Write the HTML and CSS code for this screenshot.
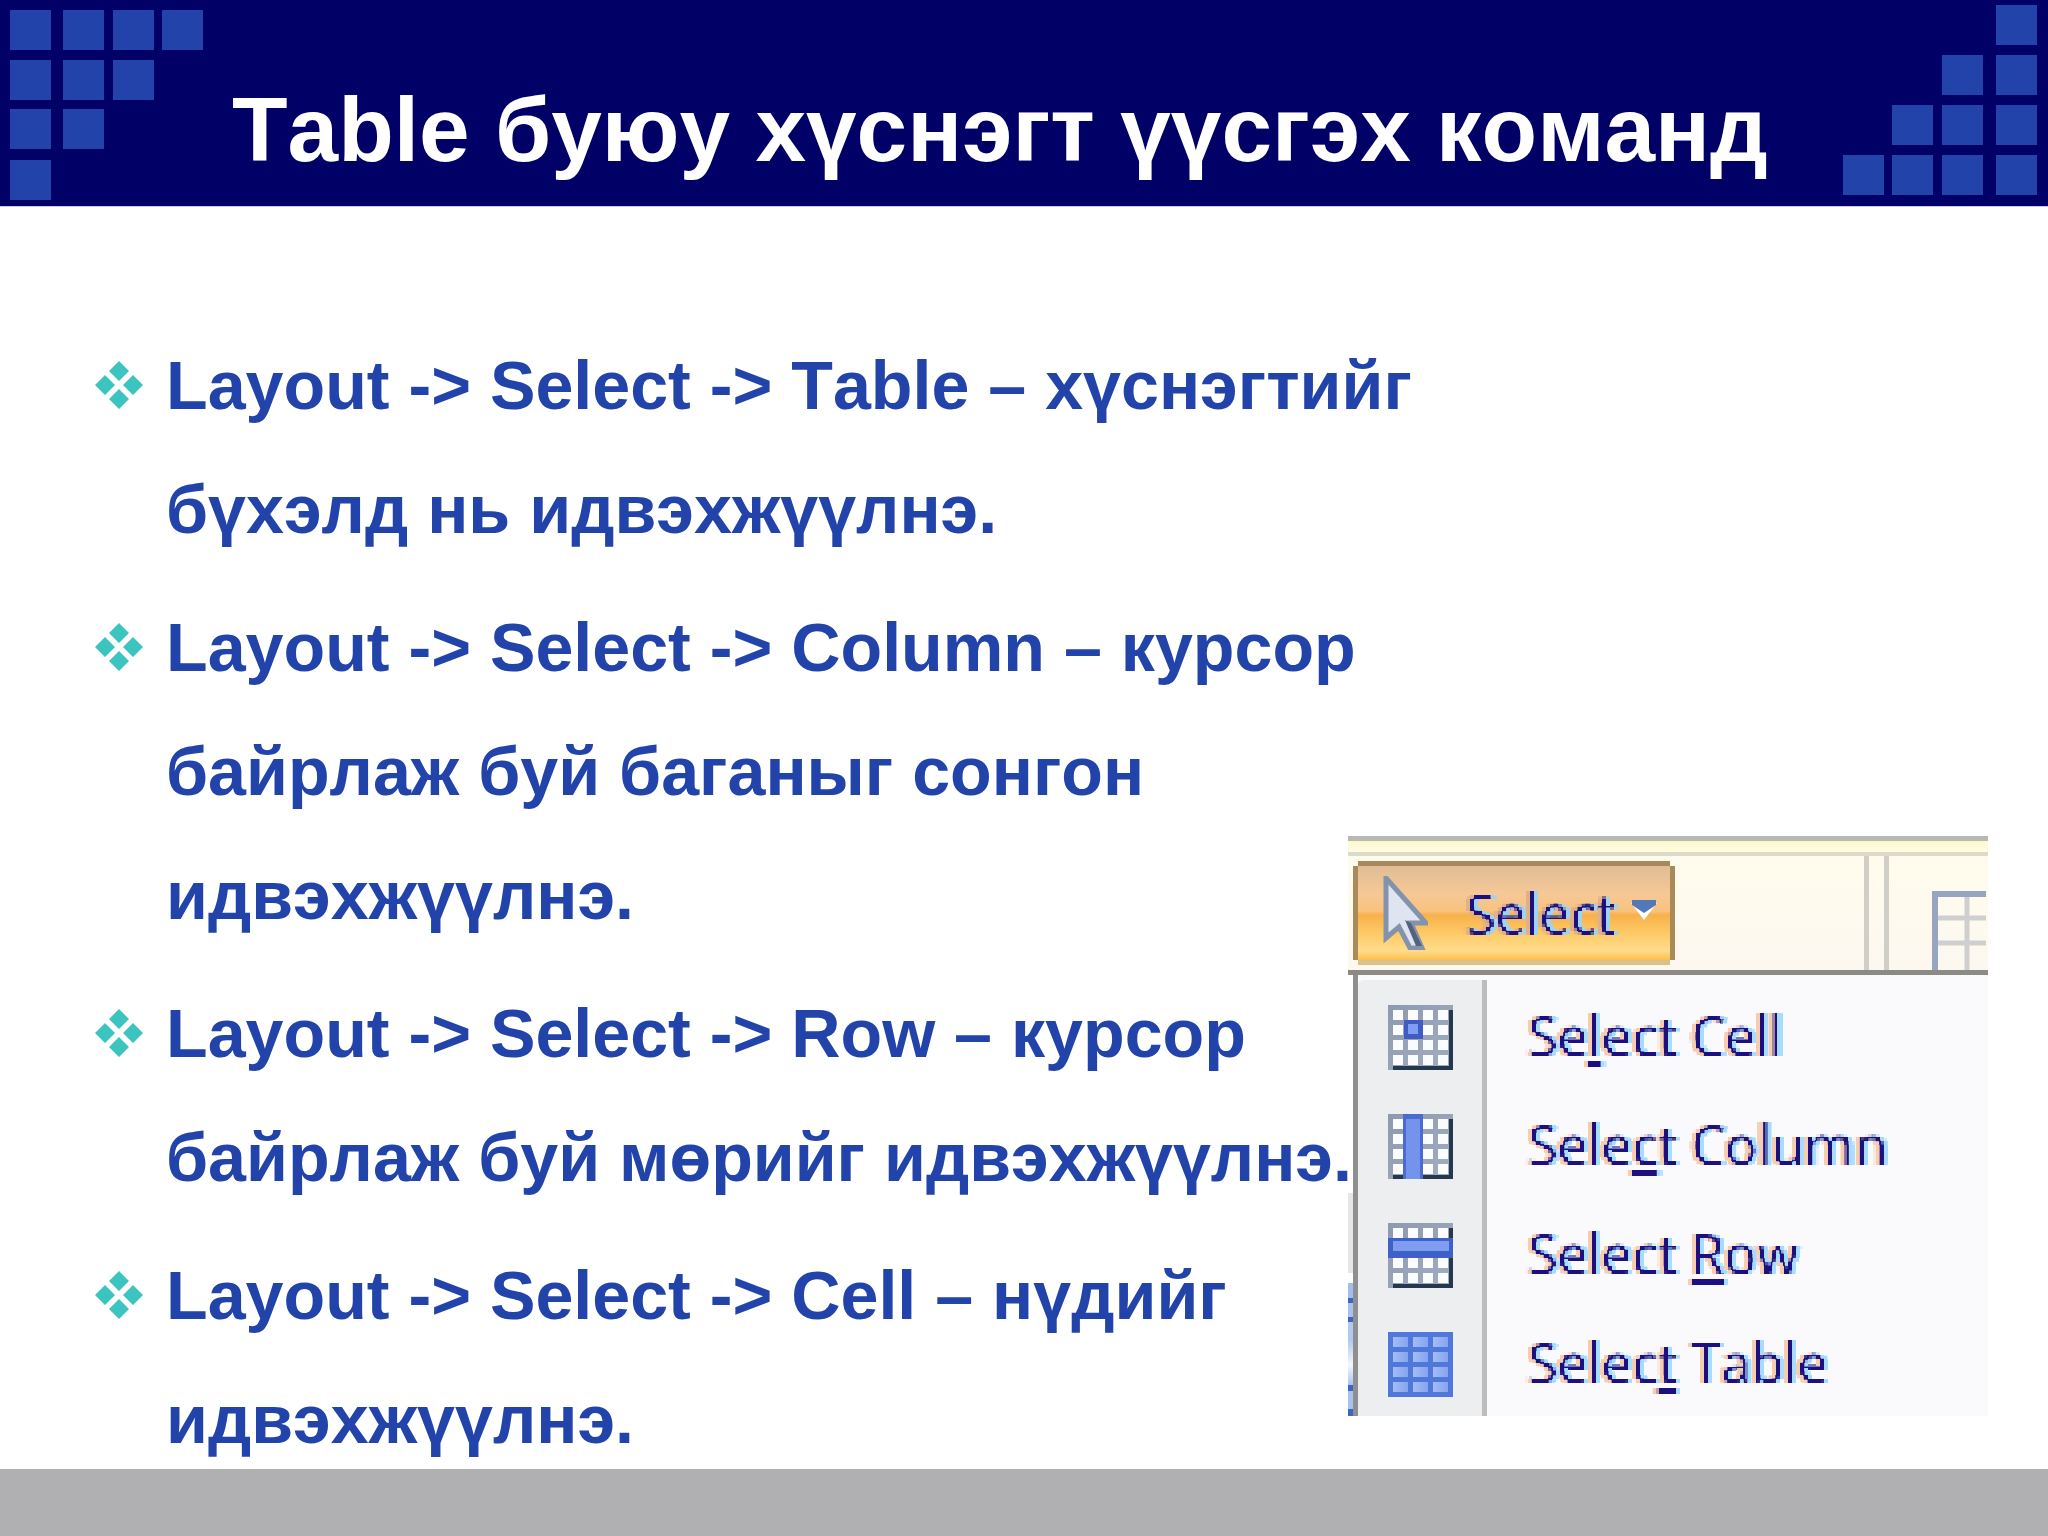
FILE: index.html
```html
<!DOCTYPE html>
<html lang="mn">
<head>
<meta charset="utf-8">
<title>Table</title>
<link rel="stylesheet" href="styles.css">
</head>
<body>
<svg class="defs" width="0" height="0" aria-hidden="true">
  <defs>
    <filter id="px" x="-5%" y="-10%" width="110%" height="120%" color-interpolation-filters="sRGB">
      <feFlood x="1" y="1" width="2" height="2"/>
      <feComposite width="4" height="4"/>
      <feTile result="a"/>
      <feComposite in="SourceGraphic" in2="a" operator="in"/>
      <feMorphology operator="dilate" radius="1"/>
      <feGaussianBlur stdDeviation="0.4"/>
    </filter>
    <linearGradient id="frame" x1="0" y1="0" x2="1" y2="1">
      <stop offset="0" stop-color="#8d99ad"/>
      <stop offset="1" stop-color="#a4aec2"/>
    </linearGradient>
    <linearGradient id="cols" x1="0" y1="0" x2="1" y2="0">
      <stop offset="0" stop-color="#a3bcf6"/>
      <stop offset="1" stop-color="#86a5ee"/>
    </linearGradient>
    <symbol id="grid" viewBox="0 0 65 65">
      <rect width="65" height="65" fill="url(#frame)"/>
      <path d="M5 63h60M63 5v60" stroke="#25384d" stroke-width="4" fill="none"/>
      <g fill="#fbfcff">
        <rect x="5" y="5" width="10" height="10"/><rect x="20" y="5" width="10" height="10"/><rect x="35" y="5" width="10" height="10"/><rect x="50" y="5" width="10" height="10"/>
        <rect x="5" y="20" width="10" height="10"/><rect x="20" y="20" width="10" height="10"/><rect x="35" y="20" width="10" height="10"/><rect x="50" y="20" width="10" height="10"/>
        <rect x="5" y="35" width="10" height="10"/><rect x="20" y="35" width="10" height="10"/><rect x="35" y="35" width="10" height="10"/><rect x="50" y="35" width="10" height="10"/>
        <rect x="5" y="50" width="10" height="10"/><rect x="20" y="50" width="10" height="10"/><rect x="35" y="50" width="10" height="10"/><rect x="50" y="50" width="10" height="10"/>
      </g>
    </symbol>
  </defs>
</svg>

<div class="page">
  <header class="header">
    <div class="squares squares-left">
      <i></i><i></i><i></i><i></i>
      <i></i><i></i><i></i><b></b>
      <i></i><i></i><b></b><b></b>
      <i></i><b></b><b></b><b></b>
    </div>
    <h1 class="title">Table буюу хүснэгт үүсгэх команд</h1>
    <div class="squares squares-right">
      <b></b><b></b><b></b><i></i>
      <b></b><b></b><i></i><i></i>
      <b></b><i></i><i></i><i></i>
      <i></i><i></i><i></i><i></i>
    </div>
  </header>

  <main class="content">
    <ul class="list">
      <li class="item">
        <svg class="bullet" viewBox="0 0 48 48"><path d="M24 0l10 10-10 10-10-10zM10 14l10 10-10 10L0 24zM38 14l10 10-10 10-10-10zM24 28l10 10-10 10-10-10z"/></svg>
        Layout -&gt; Select -&gt; Table – хүснэгтийг бүхэлд нь идвэхжүүлнэ.
      </li>
      <li class="item">
        <svg class="bullet" viewBox="0 0 48 48"><path d="M24 0l10 10-10 10-10-10zM10 14l10 10-10 10L0 24zM38 14l10 10-10 10-10-10zM24 28l10 10-10 10-10-10z"/></svg>
        Layout -&gt; Select -&gt; Column – курсор байрлаж буй баганыг сонгон идвэхжүүлнэ.
      </li>
      <li class="item">
        <svg class="bullet" viewBox="0 0 48 48"><path d="M24 0l10 10-10 10-10-10zM10 14l10 10-10 10L0 24zM38 14l10 10-10 10-10-10zM24 28l10 10-10 10-10-10z"/></svg>
        Layout -&gt; Select -&gt; Row – курсор байрлаж буй мөрийг идвэхжүүлнэ.
      </li>
      <li class="item">
        <svg class="bullet" viewBox="0 0 48 48"><path d="M24 0l10 10-10 10-10-10zM10 14l10 10-10 10L0 24zM38 14l10 10-10 10-10-10zM24 28l10 10-10 10-10-10z"/></svg>
        Layout -&gt; Select -&gt; Cell – нүдийг идвэхжүүлнэ.
      </li>
    </ul>

    <div class="shot">
      <div class="shot-top"></div>
      <div class="ribbon">
        <div class="btn">
          <svg class="cursor" viewBox="0 0 45 74">
            <path d="M3 2v60l13-11 11 21h12L28 47h15z" fill="#dfe5f0" stroke="#8493ac" stroke-width="5"/>
            <path d="M22 44l11 26h6L28 47z" fill="#55627c"/>
          </svg>
          <span class="btn-label">Select</span>
          <svg class="caret" viewBox="0 0 26 20"><path d="M0 3h26L13 20z" fill="#fff"/><path d="M1 0h24v5L13 13 1 5z" fill="#5278b8"/></svg>
        </div>
        <div class="divider"></div>
        <div class="divider second"></div>
        <svg class="ribbon-grid" viewBox="0 0 54 79">
          <path d="M3 79V3h51" fill="none" stroke="#97a6c0" stroke-width="6"/>
          <path d="M6 27h48M6 52h48" stroke="#cfcfcf" stroke-width="5"/>
          <path d="M35 6v73" stroke="#cfcfcf" stroke-width="5"/>
        </svg>
      </div>
      <div class="menu">
        <div class="menu-row">
          <div class="menu-gutter">
            <svg class="menu-icon" viewBox="0 0 65 65">
              <use href="#grid"/>
              <rect x="16" y="15" width="19" height="19" fill="#3e5cc4"/><rect x="20" y="19" width="10" height="10" fill="#7f9df2"/>
            </svg>
          </div>
          <span class="menu-label">Se<u>l</u>ect Cell</span>
        </div>
        <div class="menu-row">
          <div class="menu-gutter">
            <svg class="menu-icon" viewBox="0 0 65 65">
              <use href="#grid"/>
              <rect x="15" y="0" width="20" height="65" fill="#4a6cd0"/><rect x="18" y="5" width="14" height="60" fill="#7493ec"/>
            </svg>
          </div>
          <span class="menu-label">Sele<u>c</u>t Column</span>
        </div>
        <div class="menu-row">
          <div class="menu-gutter">
            <svg class="menu-icon" viewBox="0 0 65 65">
              <use href="#grid"/>
              <rect x="0" y="15" width="65" height="20" fill="#3e60c8"/><rect x="5" y="18" width="56" height="10" fill="#7f9df0"/>
            </svg>
          </div>
          <span class="menu-label">Select <u>R</u>ow</span>
        </div>
        <div class="menu-row">
          <div class="menu-gutter">
            <svg class="menu-icon" viewBox="0 0 65 65">
              <rect width="65" height="65" fill="#4f78da"/>
              <g fill="url(#cols)">
                <rect x="5" y="5" width="15" height="10"/><rect x="25" y="5" width="15" height="10"/><rect x="45" y="5" width="15" height="10"/>
                <rect x="5" y="20" width="15" height="10"/><rect x="25" y="20" width="15" height="10"/><rect x="45" y="20" width="15" height="10"/>
                <rect x="5" y="35" width="15" height="10"/><rect x="25" y="35" width="15" height="10"/><rect x="45" y="35" width="15" height="10"/>
                <rect x="5" y="50" width="15" height="10"/><rect x="25" y="50" width="15" height="10"/><rect x="45" y="50" width="15" height="10"/>
              </g>
            </svg>
          </div>
          <span class="menu-label">Selec<u>t</u> Table</span>
        </div>
      </div>
    </div>
  </main>

  <footer class="footer"></footer>
</div>
</body>
</html>
```
FILE: styles.css
```css
* { box-sizing: border-box; }
html, body { margin: 0; padding: 0; background: #fff; }
.defs { position: absolute; }

.page {
  position: relative;
  width: 2048px;
  height: 1536px;
  display: flex;
  flex-direction: column;
  overflow: hidden;
  font-family: "Liberation Sans", Arial, sans-serif;
  font-kerning: none;
}

/* Header */
.header {
  height: 207px;
  flex: none;
  display: flex;
  background: #000066;
  border-bottom: 1px solid #c9c9e2;
}
.squares { display: grid; flex: none; }
.squares i, .squares b { display: block; width: 41px; height: 40px; }
.squares i { background: #2244aa; }
.squares-left {
  margin: 10px 0 0 10px;
  grid-template-columns: 53px 50px 49px 41px;
  grid-template-rows: 50px 49px 51px 40px;
}
.squares-right {
  margin: 5px 11px 0 auto;
  grid-template-columns: 49px 50px 54px 41px;
  grid-template-rows: 50px 50px 50px 40px;
}
.title {
  margin: 0 0 0 29px;
  padding-top: 78px;
  color: #fff;
  font-size: 91px;
  line-height: 104px;
  font-weight: 700;
  white-space: nowrap;
}

/* Bullets */
.content { flex: 1; min-height: 0; position: relative; padding: 116px 0 0 95px; }
.list { list-style: none; margin: 0; padding: 0; width: 1335px; }
.item {
  position: relative;
  padding-left: 71px;
  font-size: 68.2px;
  line-height: 124px;
  font-weight: 700;
  color: #2244aa;
}
.item + .item { margin-top: 14px; }
.bullet {
  position: absolute;
  left: 0;
  top: 38px;
  width: 48px;
  height: 48px;
  fill: #3cc4c0;
}

/* Word screenshot */
.shot {
  position: absolute;
  left: 1348px;
  top: 629px;
  width: 640px;
  height: 580px;
  display: flex;
  flex-direction: column;
  background: #fff;
  overflow: hidden;
  font-kerning: normal;
}
.shot-top {
  flex: none;
  height: 20px;
  border-top: 5px solid #b9b9b4;
  border-bottom: 4px solid #dcdacb;
  background: linear-gradient(#fbf9cf, #fffddf);
}
.ribbon {
  flex: none;
  position: relative;
  height: 119px;
  display: flex;
  background: linear-gradient(#fffbec, #fcf8f0);
  border-bottom: 5px solid #8c8a84;
}
.btn {
  margin: 5px 0 0 5px;
  width: 322px;
  height: 104px;
  flex: none;
  position: relative;
  display: flex;
  align-items: center;
  border: 5px solid #a98b5a;
  border-top-color: #a8895c;
  border-bottom-color: #dcc08a;
  clip-path: polygon(5px 0, calc(100% - 5px) 0, calc(100% - 5px) 5px, 100% 5px, 100% calc(100% - 5px), calc(100% - 5px) calc(100% - 5px), calc(100% - 5px) 100%, 5px 100%, 5px calc(100% - 5px), 0 calc(100% - 5px), 0 5px, 5px 5px);
  background: linear-gradient(#e0bd96 0%, #f6c896 30%, #f9c27c 48%, #f8b04a 52%, #fcc660 68%, #ffdc8a 90%, #fbbe50 100%);
}
.cursor { width: 45px; height: 74px; margin-left: 25px; flex: none; }
.btn-label {
  margin-left: 38px;
  font-family: "Open Sans", "Noto Sans", sans-serif;
  font-size: 54px;
  line-height: 60px;
  color: #1c1080;
  text-shadow: 4px 0 #9fd4ee, -4px 0 #e0b08a;
  filter: url(#px);
}
.caret { width: 26px; height: 20px; margin-left: 16px; flex: none; margin-top: -6px; }
.divider {
  flex: none;
  width: 5px;
  margin-left: 189px;
  background: #cfcfc8;
}
.divider.second { margin-left: 15px; }
.ribbon-grid { width: 54px; height: 79px; margin: 35px 0 0 43px; flex: none; }

.menu {
  flex: 1;
  padding-left: 5px;
  position: relative;
  background: #fafafc;
  border-top: 0;
}
.menu::before {
  content: "";
  position: absolute;
  left: 0;
  top: 0;
  bottom: 0;
  width: 5px;
  background: linear-gradient(#fff 0 218px, #e6e6e6 218px 298px, #fff 298px 308px, #a4bdee 308px 323px, #3d66c4 323px 328px, #a8c2f0 328px 342px, #3d66c4 342px 347px, #b0c8f2 347px 365px, #f4f7fd 390px, #a8c2f0 410px, #3d66c4 410px 416px, #a8c2f0 416px 434px, #3d66c4 434px);
}
.menu::after {
  content: "";
  position: absolute;
  left: 5px;
  top: 0;
  width: 5px;
  height: 5px;
  background: #8f8f8f;
}
.menu-row {
  height: 109px;
  display: flex;
  align-items: center;
  border-left: 5px solid #8f8f8f;
}
.menu-row:first-child { margin-top: 5px; height: 112px; }
.menu-gutter {
  flex: none;
  width: 129px;
  height: 109px;
  padding: 22px 0 0 30px;
  background: #eceef0;
  border-right: 5px solid #bcbcbc;
}
.menu-row:first-child .menu-gutter { height: 112px; padding-top: 25px; border-top-left-radius: 6px; }
.menu-icon { display: block; width: 65px; height: 65px; }
.menu-label {
  margin-left: 41px;
  margin-top: -6px;
  font-family: "Open Sans", "Noto Sans", sans-serif;
  font-size: 54px;
  line-height: 70px;
  color: #1c1080;
  white-space: nowrap;
  text-shadow: 4px 0 #a6dcff, -4px 0 #f6cdb0;
  filter: url(#px);
}
.menu-row:first-child .menu-label { margin-top: -3px; }
.menu-label u { text-decoration-thickness: 4px; text-underline-offset: 6px; }

/* Footer */
.footer { height: 67px; flex: none; background: #b0afb1; }
```
